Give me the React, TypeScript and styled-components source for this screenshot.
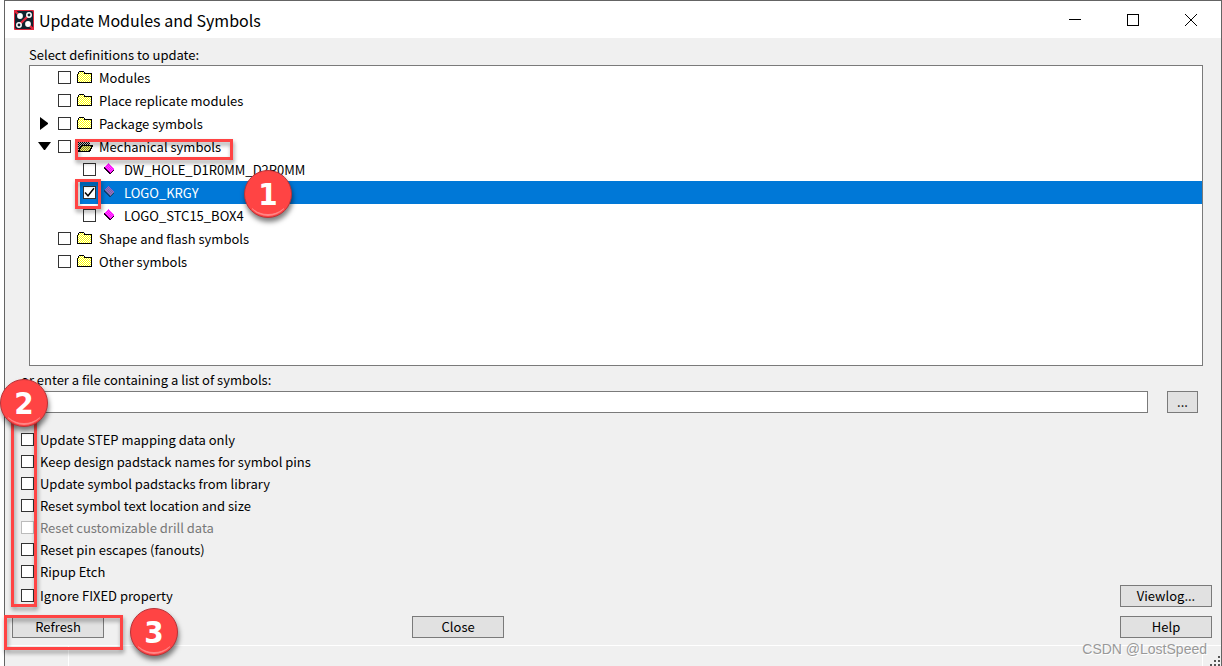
import React, { useState } from "react";
import styled, { createGlobalStyle, css } from "styled-components";

const ink = "#000000";
const line = "#7a7a7a";
const accent = "#ff4444";

const GlobalStyle = createGlobalStyle`
  * { box-sizing: border-box; }
  body {
    margin: 0;
    background: #ffffff;
    color: ${ink};
    font: 13px/22px "Noto Sans CJK SC", "Noto Sans", sans-serif;
    overflow: hidden;
  }
  button, input { font: inherit; color: inherit; }
`;

const Window = styled.main`
  position: relative;
  display: flex;
  flex-direction: column;
  min-height: 100vh;
  margin-left: 4px;
  border: solid #646464;
  border-width: 1px 1px 0;
  background: #f0f0f0;
`;

const TitleBar = styled.header`
  display: flex;
  align-items: center;
  height: 37px;
  padding: 0 1px 0 9px;
  background: #ffffff;
`;

const Title = styled.h1`
  flex: 1;
  margin: 0 0 0 5px;
  font-size: 16px;
  font-weight: 400;
  line-height: 20px;
`;

const WindowButton = styled.button`
  display: grid;
  place-items: center;
  width: 58px;
  height: 36px;
  padding: 0;
  border: 0;
  background: transparent;
`;

const TreeSection = styled.section`
  padding: 6px 18px 0 24px;
`;

const Caption = styled.div`
  height: 21px;
`;

const Tree = styled.ul`
  height: 301px;
  margin: 0;
  padding: 0;
  border: 1px solid ${line};
  background: #ffffff;
  list-style: none;
`;

const TreeRow = styled.li<{ $child?: boolean; $selected?: boolean }>`
  position: relative;
  display: flex;
  align-items: center;
  height: 23px;
  padding-left: ${(p) => (p.$child ? 53 : 8)}px;
  ${(p) =>
    p.$selected &&
    css`
      background: linear-gradient(90deg, #ffffff 50px, #0078d7 50px);
      color: #ffffff;
    `}
`;

const Expander = styled.button`
  display: grid;
  place-items: center;
  width: 14px;
  height: 14px;
  margin-right: 6px;
  padding: 0;
  border: 0;
  background: transparent;
`;

const ExpanderSpace = styled.span`
  width: 20px;
`;

const CheckLabel = styled.label<{ $disabled?: boolean; $tall?: boolean }>`
  display: flex;
  align-items: center;
  gap: 6px;
  height: ${(p) => (p.$tall ? 23 : 22)}px;
  color: ${(p) => (p.$disabled ? "#787878" : "inherit")};
  white-space: nowrap;
`;

const Check = styled.input.attrs({ type: "checkbox" })`
  appearance: none;
  flex: none;
  width: 13px;
  height: 13px;
  margin: 0;
  border: 1px solid #333333;
  background: #ffffff;

  &:checked {
    background: #ffffff
      url("data:image/svg+xml,%3Csvg xmlns='http://www.w3.org/2000/svg' viewBox='0 0 11 11'%3E%3Cpath d='M1 5.5 4 8.8 10 1.2' fill='none' stroke='%23000' stroke-width='1.4'/%3E%3C/svg%3E");
  }

  &:disabled {
    border-color: #bcbcbc;
  }
`;

const FileSection = styled.section`
  padding: 3px 23px 0 16px;
`;

const FileLabel = styled.label`
  display: block;
`;

const FileRow = styled.div`
  display: flex;
  gap: 19px;
`;

const FileInput = styled.input`
  flex: 1;
  min-width: 0;
  height: 22px;
  padding: 0 4px;
  border: 1px solid ${line};
  background: #ffffff;
`;

const PushButton = styled.button<{ $small?: boolean }>`
  width: ${(p) => (p.$small ? 31 : 92)}px;
  height: 22px;
  padding: 0;
  border: 1px solid ${line};
  background: #e1e1e1;
  line-height: 20px;
`;

const LowerArea = styled.div`
  display: flex;
  align-items: flex-end;
  justify-content: space-between;
  padding: 16px 9px 0 16px;
`;

const Options = styled.fieldset`
  position: relative;
  min-width: 0;
  margin: 0;
  padding: 0;
  border: 0;

  ${Check} {
    margin-bottom: 1px;
  }
`;

const OptionGap = styled.div`
  height: 2px;
`;

const Actions = styled.footer`
  display: grid;
  grid-template-columns: 13fr 92px 23fr;
  padding: 9px 9px 7px 7px;
`;

const ActionCell = styled.div<{ $end?: boolean }>`
  position: relative;
  display: flex;
  justify-content: ${(p) => (p.$end ? "flex-end" : "flex-start")};
`;

const StatusBar = styled.div`
  display: flex;
  flex: 1;
  min-height: 20px;
  border-top: 1px solid #ffffff;
`;

const StatusPane = styled.div<{ $wide?: boolean }>`
  flex: ${(p) => (p.$wide ? "1" : "0 0 64px")};
  border-right: 1px solid #ffffff;
`;

const Grip = styled.svg`
  align-self: flex-end;
  width: 18px;
  height: 12px;
`;

const Watermark = styled.div`
  position: absolute;
  right: 14px;
  bottom: 6px;
  color: #999999;
  font: 14px/22px "Liberation Sans", Arial, sans-serif;
  text-shadow: 1px 1px 0 #ffffff;
`;

const Highlight = styled.div<{ $x: number; $y: number; $w: number; $h: number }>`
  position: absolute;
  z-index: 1;
  left: ${(p) => p.$x}px;
  top: ${(p) => p.$y}px;
  width: ${(p) => p.$w}px;
  height: ${(p) => p.$h}px;
  border: 3px solid ${accent};
  filter: drop-shadow(1px 3px 2px rgba(0, 0, 0, 0.4));
  pointer-events: none;
`;

const Badge = styled.div<{ $x: number; $y: number }>`
  position: absolute;
  z-index: 2;
  left: ${(p) => p.$x}px;
  top: ${(p) => p.$y}px;
  display: grid;
  place-items: center;
  width: 48px;
  height: 48px;
  border: 1px solid #b93338;
  border-radius: 50%;
  background: ${accent};
  box-shadow: 1px 4px 5px rgba(0, 0, 0, 0.5);
  color: #ffffff;
  font: 700 31px/46px "DejaVu Sans Condensed", "DejaVu Sans", sans-serif;
  pointer-events: none;

  &::after {
    content: "";
    position: absolute;
    inset: 1px;
    border-bottom: 2px solid #ff8585;
    border-radius: 50%;
    clip-path: inset(36px 6px 0 6px);
  }
`;

function AppIcon() {
  return (
    <svg width="20" height="20" viewBox="0 0 20 20" aria-hidden="true">
      <rect width="20" height="20" rx="1" fill="#d8243a" />
      <path d="M2 1H18L19 2V18L18 19H2L1 18V2Z" fill="#10222e" />
      <path d="M0 0 4 4M16 16 20 20M4 16 16 4" stroke="#e0263c" strokeWidth="2.4" />
      <circle cx="6" cy="6" r="2.9" fill="#fff" />
      <circle cx="14" cy="14" r="2.9" fill="#fff" />
      <circle cx="15" cy="5" r="2.2" fill="#10222e" stroke="#fff" strokeWidth="1.5" />
      <circle cx="5" cy="15" r="2.2" fill="#10222e" stroke="#fff" strokeWidth="1.5" />
    </svg>
  );
}

/* Two-colour pixel dithers shared by the tree icons. */
function DitherPatterns() {
  const dithers = [
    ["dither-yellow", "#ffff00", "#ffffff"],
    ["dither-olive", "#ffff60", "#808040"],
    ["dither-grey", "#d8d8d8", "#000000"],
    ["dither-pink", "#ff50ff", "#ff00ff"],
    ["dither-blue", "#a050d8", "#6c8490"],
  ];
  return (
    <svg width="0" height="0" display="block" aria-hidden="true">
      {dithers.map(([id, base, dot]) => (
        <pattern key={id} id={id} width="2" height="2" patternUnits="userSpaceOnUse">
          <rect width="2" height="2" fill={base} />
          <path d="M1 0h1v1h-1zM0 1h1v1h-1z" fill={dot} />
        </pattern>
      ))}
    </svg>
  );
}

type FolderKind = "closed" | "open";

function Folder({ kind }: { kind: FolderKind }) {
  if (kind === "open") {
    return (
      <svg width="16" height="13" viewBox="0 0 16 13" shapeRendering="crispEdges" aria-hidden="true">
        <path d="M1 12V2H2V1H6V2H13V6H5L2 12Z" fill="url(#dither-grey)" />
        <path d="M1.5 11.5 4.5 5.5H15.5L12.5 11.5Z" fill="url(#dither-olive)" stroke="#000" />
      </svg>
    );
  }
  return (
    <svg width="16" height="13" viewBox="0 0 16 13" shapeRendering="crispEdges" aria-hidden="true">
      <path
        d="M.5 3.5 1.5 2.5V1.5L2.5.5H6.5L7.5 1.5V2.5H14.5V11.5H.5Z"
        fill="url(#dither-yellow)"
        stroke="#000"
      />
    </svg>
  );
}

function Diamond({ selected }: { selected?: boolean }) {
  return (
    <svg width="16" height="13" viewBox="0 0 16 13" shapeRendering="crispEdges" aria-hidden="true">
      <path d="M2 4 6 0 12 6V7L8 11H7L2 6Z" fill={selected ? "#103c78" : "#200020"} />
      <path d="M2 4 6 0 12 6 8 10Z" fill={selected ? "url(#dither-blue)" : "url(#dither-pink)"} />
    </svg>
  );
}

function Arrow({ open }: { open: boolean }) {
  return (
    <svg width="14" height="14" viewBox="0 0 14 14" aria-hidden="true">
      <path d={open ? "M0 2H13L7 10H6Z" : "M2 0 10 6V7L2 13Z"} />
    </svg>
  );
}

interface Item {
  name: string;
  icon: FolderKind | "diamond";
  open?: boolean;
}

const items: Item[] = [
  { name: "Modules", icon: "closed" },
  { name: "Place replicate modules", icon: "closed" },
  { name: "Package symbols", icon: "closed", open: false },
  { name: "Mechanical symbols", icon: "open", open: true },
  { name: "DW_HOLE_D1R0MM_D2R0MM", icon: "diamond" },
  { name: "LOGO_KRGY", icon: "diamond" },
  { name: "LOGO_STC15_BOX4", icon: "diamond" },
  { name: "Shape and flash symbols", icon: "closed" },
  { name: "Other symbols", icon: "closed" },
];

const options = [
  "Update STEP mapping data only",
  "Keep design padstack names for symbol pins",
  "Update symbol padstacks from library",
  "Reset symbol text location and size",
  "Reset customizable drill data",
  "Reset pin escapes (fanouts)",
  "Ripup Etch",
  "Ignore FIXED property",
];

export default function App() {
  const [checked, setChecked] = useState<string[]>(["LOGO_KRGY"]);
  const toggle = (name: string) =>
    setChecked((all) => (all.includes(name) ? all.filter((n) => n !== name) : [...all, name]));

  return (
    <>
      <GlobalStyle />
      <DitherPatterns />
      <Window>
        <TitleBar>
          <AppIcon />
          <Title>Update Modules and Symbols</Title>
          <WindowButton aria-label="Minimize">
            <svg width="12" height="12" shapeRendering="crispEdges"><path d="M0 5.5H12" stroke="#000" /></svg>
          </WindowButton>
          <WindowButton aria-label="Maximize">
            <svg width="12" height="12" shapeRendering="crispEdges"><path d="M.5.5H11.5V11.5H.5Z" fill="none" stroke="#000" /></svg>
          </WindowButton>
          <WindowButton aria-label="Close window">
            <svg width="12" height="12"><path d="M0 0 12 12M12 0 0 12" stroke="#000" /></svg>
          </WindowButton>
        </TitleBar>

        <TreeSection>
          <Caption>Select definitions to update:</Caption>
          <Tree>
            {items.map((item) => {
              const child = item.icon === "diamond";
              const selected = item.name === "LOGO_KRGY";
              return (
                <TreeRow key={item.name} $child={child} $selected={selected}>
                  {!child &&
                    (item.open === undefined ? (
                      <ExpanderSpace />
                    ) : (
                      <Expander aria-label={`Toggle ${item.name}`} aria-expanded={item.open}>
                        <Arrow open={item.open} />
                      </Expander>
                    ))}
                  <CheckLabel $tall>
                    <Check checked={checked.includes(item.name)} onChange={() => toggle(item.name)} />
                    {item.icon === "diamond" ? <Diamond selected={selected} /> : <Folder kind={item.icon} />}
                    {item.name}
                  </CheckLabel>
                  {item.icon === "open" && <Highlight $x={45} $y={4} $w={158} $h={21} />}
                  {selected && (
                    <>
                      <Highlight $x={45} $y={-2} $w={26} $h={30} />
                      <Badge $x={214} $y={-11}>1</Badge>
                    </>
                  )}
                </TreeRow>
              );
            })}
          </Tree>
        </TreeSection>

        <FileSection>
          <FileLabel htmlFor="symbol-file">or enter a file containing a list of symbols:</FileLabel>
          <FileRow>
            <FileInput id="symbol-file" />
            <PushButton $small aria-label="Browse">...</PushButton>
          </FileRow>
        </FileSection>

        <LowerArea>
          <Options>
            {options.map((name, i) => (
              <React.Fragment key={name}>
                {i === options.length - 1 && <OptionGap />}
                <CheckLabel $disabled={i === 4}>
                  <Check disabled={i === 4} checked={checked.includes(name)} onChange={() => toggle(name)} />
                  {name}
                </CheckLabel>
              </React.Fragment>
            ))}
            <Highlight $x={-10} $y={-29} $w={26} $h={207} />
            <Badge $x={-21} $y={-50}>2</Badge>
          </Options>
          <PushButton>Viewlog...</PushButton>
        </LowerArea>

        <Actions>
          <ActionCell>
            <PushButton>Refresh</PushButton>
            <Highlight $x={-8} $y={-1} $w={119} $h={35} />
            <Badge $x={118} $y={-8}>3</Badge>
          </ActionCell>
          <PushButton>Close</PushButton>
          <ActionCell $end>
            <PushButton>Help</PushButton>
          </ActionCell>
        </Actions>

        <StatusBar>
          <StatusPane />
          <StatusPane $wide />
          <Grip viewBox="0 0 18 12" shapeRendering="crispEdges" aria-hidden="true">
            <path
              d="M15 2h2v2h-2zM15 6h2v2h-2zM11 6h2v2h-2zM15 10h2v2h-2zM11 10h2v2h-2zM7 10h2v2h-2z"
              fill="#555"
            />
          </Grip>
        </StatusBar>
        <Watermark>CSDN @LostSpeed</Watermark>
      </Window>
    </>
  );
}
